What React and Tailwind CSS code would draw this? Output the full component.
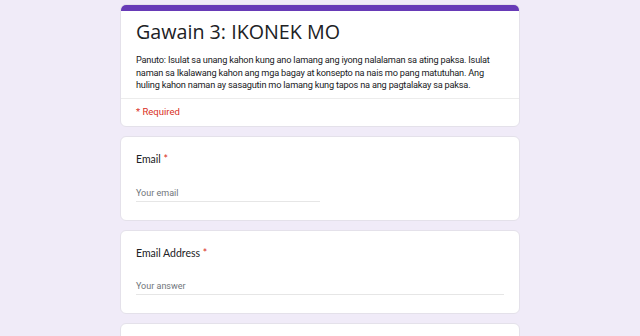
export default function App() {
  const roboto = { fontFamily: "Roboto, 'Liberation Sans', sans-serif" };
  const gs = { fontFamily: "Lato, 'Open Sans', sans-serif" };
  return (
    <div className="w-[640px] h-[336px] overflow-hidden bg-[#f0ebf8] flex flex-col items-center pt-[4px] gap-[9px]" style={roboto}>
      <div className="w-[400px] shrink-0 bg-white rounded-[6px] border border-[#e4e1ea] overflow-hidden">
        <div className="h-[6px] bg-[#673ab7]"></div>
        <div className="px-[15px] pt-[7px] pb-[6px]">
          <div className="text-[19.7px] leading-[28px] text-[#202124]" style={{ fontFamily: "'Open Sans', sans-serif" }}>
            Gawain 3: IKONEK MO
          </div>
          <div className="mt-[8px] text-[9.2px] leading-[12.5px] text-[#202124] tracking-[-0.2px]">
            Panuto: Isulat sa unang kahon kung ano lamang ang iyong nalalaman sa ating paksa. Isulat naman sa Ikalawang kahon ang mga bagay at konsepto na nais mo pang matutuhan. Ang huling kahon naman ay sasagutin mo lamang kung tapos na ang pagtalakay sa paksa.
          </div>
        </div>
        <div className="border-t border-[#ececec] px-[15px] pt-[6px] pb-[8px] text-[9.5px] leading-[13px] text-[#d93025]">
          * Required
        </div>
      </div>

      <div className="w-[400px] h-[85px] shrink-0 bg-white rounded-[6px] border border-[#e4e1ea] px-[15px] pt-[14px]">
        <div className="text-[10.5px] leading-[16px] text-[#202124]" style={gs}>
          Email <span className="text-[#d93025]">*</span>
        </div>
        <div className="mt-[20px] w-[184px] border-b border-[#e6e6e6] pb-[2px] text-[9px] leading-[12px] text-[#70757a]">
          Your email
        </div>
      </div>

      <div className="w-[400px] h-[84px] shrink-0 bg-white rounded-[6px] border border-[#e4e1ea] px-[15px] pt-[14px]">
        <div className="text-[10.5px] leading-[16px] text-[#202124]" style={gs}>
          Email Address <span className="text-[#d93025]">*</span>
        </div>
        <div className="mt-[19px] w-full border-b border-[#e6e6e6] pb-[2px] text-[9px] leading-[12px] text-[#70757a]">
          Your answer
        </div>
      </div>

      <div className="w-[400px] h-[60px] shrink-0 bg-white rounded-[6px] border border-[#e4e1ea]"></div>
    </div>
  );
}
